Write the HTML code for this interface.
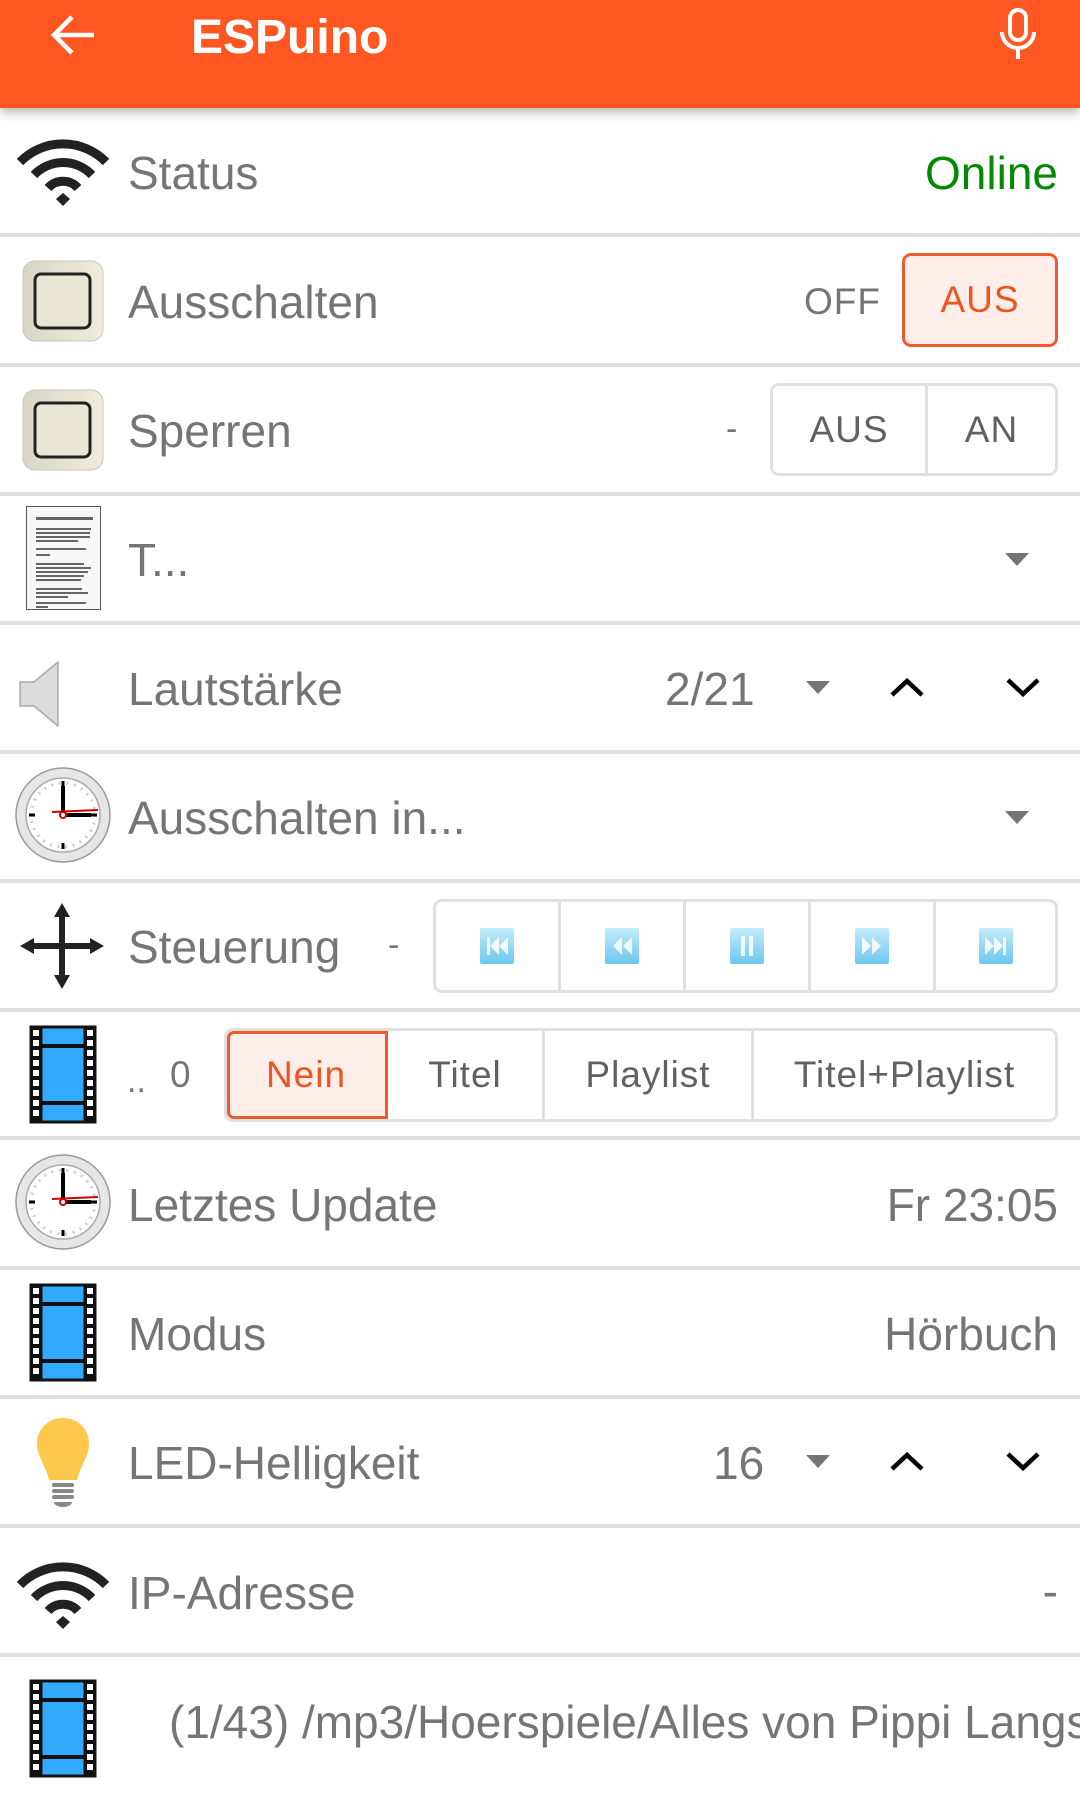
<!DOCTYPE html>
<html><head><meta charset="utf-8"><style>
*{margin:0;padding:0;box-sizing:border-box}
body{width:1080px;height:1818px;background:#fff;position:relative;overflow:hidden;font-family:"Liberation Sans",sans-serif;color:#757575}
.hdr{position:absolute;left:0;top:0;width:1080px;height:108px;background:#ff5722;box-shadow:0 4px 10px rgba(0,0,0,.3);z-index:2}
.sep{position:absolute;left:0;width:1080px;height:4px;background:#e0e0e0}
.t{position:absolute;font-size:46px;line-height:50px;white-space:nowrap}
.ab{position:absolute}
.seg{position:absolute;border:3px solid #e0e0e0;border-radius:9px;display:flex;overflow:hidden}
.seg>div{display:flex;align-items:center;justify-content:center;font-size:37px;letter-spacing:1px;color:#616161;border-right:3px solid #e0e0e0}
.seg>div:last-child{border-right:none}
.seg .on{background:#fdeeea;color:#f0541e;outline:3px solid #ee5a2a;outline-offset:-3px;border-radius:7px 0 0 7px}
</style></head><body>
<svg width="0" height="0" style="position:absolute"><defs>
<linearGradient id="bg" x1="0" y1="0" x2="0" y2="1"><stop offset="0" stop-color="#c4ecfc"/><stop offset="1" stop-color="#6cc6ee"/></linearGradient>
<linearGradient id="sw" x1="0" x2="1"><stop offset="0" stop-color="#d8d6c6"/><stop offset="1" stop-color="#efecdc"/></linearGradient>
</defs></svg>
<div class="hdr">
<svg class="ab" style="left:50px;top:14px" width="46" height="42" viewBox="0 0 46 42"><path d="M44 21H4M22 3L4 21L22 39" stroke="#fff" stroke-width="4.5" fill="none"/></svg>
<div class="t" style="left:191px;top:10px;color:#fff;font-size:48px;line-height:56px;font-weight:bold">ESPuino</div>
<svg class="ab" style="left:998px;top:8px" width="40" height="52" viewBox="0 0 40 52"><rect x="12" y="2" width="16" height="30" rx="8" fill="none" stroke="#fff" stroke-width="4"/><path d="M4 24a16 16 0 0 0 32 0M20 40v11" stroke="#fff" stroke-width="4" fill="none"/></svg>
</div>

<svg class="ab" style="left:14px;top:137px" width="98" height="70" viewBox="0 0 98 70"><g fill="none" stroke="#222" stroke-width="9"><path d="M6 25a60 60 0 0 1 86 0"/><path d="M20 38a40 40 0 0 1 58 0"/><path d="M34 51a20 20 0 0 1 30 0"/></g><path d="M42 62l7-6 7 6-7 7z" fill="#222"/></svg>
<div class="t" style="left:128px;top:148px">Status</div>
<div class="t" style="right:22px;top:148px;color:#008a00">Online</div>
<div class="sep" style="top:233px"></div>

<svg class="ab" style="left:22px;top:260px" width="82" height="82" viewBox="0 0 82 82"><rect x="1" y="1" width="80" height="80" rx="12" fill="url(#sw)" stroke="#c8c6b8"/><rect x="13" y="14" width="55" height="54" rx="6" fill="#e9e6d6" stroke="#222" stroke-width="3"/></svg>
<div class="t" style="left:128px;top:277px">Ausschalten</div>
<div class="t" style="left:804px;top:280px;font-size:37px;line-height:44px;letter-spacing:1px">OFF</div>
<div class="seg" style="left:902px;top:253px;width:156px;height:94px;border-color:#ee5a2a;background:#fdeeea"><div style="width:100%;color:#f0541e">AUS</div></div>
<div class="sep" style="top:363px"></div>

<svg class="ab" style="left:22px;top:389px" width="82" height="82" viewBox="0 0 82 82"><rect x="1" y="1" width="80" height="80" rx="12" fill="url(#sw)" stroke="#c8c6b8"/><rect x="13" y="14" width="55" height="54" rx="6" fill="#e9e6d6" stroke="#222" stroke-width="3"/></svg>
<div class="t" style="left:128px;top:406px">Sperren</div>
<div class="t" style="left:726px;top:404px;font-size:34px">-</div>
<div class="seg" style="left:770px;top:383px;width:288px;height:93px"><div style="width:155px">AUS</div><div style="flex:1">AN</div></div>
<div class="sep" style="top:492px"></div>

<svg class="ab" style="left:26px;top:506px" width="75" height="104" viewBox="0 0 75 104"><rect x="0.5" y="0.5" width="74" height="103" fill="#f7f7f7" stroke="#555"/><g fill="#666"><rect x="10" y="11" width="57" height="3"/><rect x="10" y="22" width="55" height="2"/><rect x="10" y="26" width="54" height="2"/><rect x="10" y="30" width="54" height="2"/><rect x="10" y="34" width="42" height="2"/><rect x="10" y="42" width="50" height="2"/><rect x="10" y="48" width="14" height="2"/><rect x="10" y="57" width="48" height="2"/><rect x="10" y="61" width="55" height="2"/><rect x="10" y="65" width="52" height="2"/><rect x="10" y="69" width="48" height="2"/><rect x="10" y="73" width="45" height="2"/><rect x="10" y="82" width="46" height="2"/><rect x="10" y="86" width="52" height="2"/><rect x="10" y="90" width="32" height="2"/><rect x="10" y="96" width="50" height="2"/><rect x="10" y="100" width="12" height="2"/></g></svg>
<div class="t" style="left:128px;top:535px">T...</div>
<svg class="ab" style="left:1005px;top:553px" width="24" height="13"><path d="M0 0h24L12 13z" fill="#757575"/></svg>
<div class="sep" style="top:621px"></div>

<svg class="ab" style="left:18px;top:660px" width="44" height="68" viewBox="0 0 44 68"><path d="M2 22h14L40 2v64L16 46H2z" fill="#dcdcdc" stroke="#aaa" stroke-width="1.5" stroke-linejoin="round"/></svg>
<div class="t" style="left:128px;top:664px">Lautstärke</div>
<div class="t" style="left:665px;top:664px">2/21</div>
<svg class="ab" style="left:806px;top:681px" width="24" height="13"><path d="M0 0h24L12 13z" fill="#757575"/></svg>
<svg class="ab" style="left:889px;top:676px" width="36" height="22"><path d="M3 19L18 5l15 14" stroke="#000" stroke-width="4.5" fill="none"/></svg>
<svg class="ab" style="left:1005px;top:676px" width="36" height="22"><path d="M3 4l15 14L33 4" stroke="#000" stroke-width="4.5" fill="none"/></svg>
<div class="sep" style="top:750px"></div>

<svg class="ab" style="left:14px;top:766px" width="98" height="98" viewBox="0 0 98 98"><circle cx="49" cy="49" r="47" fill="#e6e6e6" stroke="#999" stroke-width="1.5"/><circle cx="49" cy="49" r="37" fill="#fff" stroke="#aaa" stroke-width="1.5"/><circle cx="49" cy="49" r="32" fill="none" stroke="#ccc" stroke-width="3" stroke-dasharray="2 5.7"/><path d="M49 15v6M49 77v6M15 49h6M77 49h6" stroke="#000" stroke-width="3"/><path d="M49 20v29h28" stroke="#000" stroke-width="4" fill="none"/><path d="M38 46l46-2" stroke="#c00" stroke-width="2"/><circle cx="49" cy="49" r="3" fill="#fff" stroke="#c00" stroke-width="2"/></svg>
<div class="t" style="left:128px;top:793px">Ausschalten in...</div>
<svg class="ab" style="left:1005px;top:811px" width="24" height="13"><path d="M0 0h24L12 13z" fill="#757575"/></svg>
<div class="sep" style="top:879px"></div>

<svg class="ab" style="left:20px;top:903px" width="84" height="86" viewBox="0 0 84 86"><path d="M42 6v74M6 43h72" stroke="#222" stroke-width="6"/><path d="M42 0l-8 14h16zM42 86l-8-14h16zM0 43l14-8v16zM84 43l-14-8v16z" fill="#222"/></svg>
<div class="t" style="left:128px;top:922px">Steuerung</div>
<div class="t" style="left:388px;top:920px;font-size:34px">-</div>
<div class="seg" style="left:433px;top:899px;width:625px;height:94px">
<div style="width:125px"><svg width="34" height="36" viewBox="0 0 34 36"><rect width="34" height="36" rx="2" fill="url(#bg)"/><path d="M7 9h3v18H7zM19 9v18l-9-9zM28 9v18l-9-9z" fill="#fff" opacity=".85"/></svg></div>
<div style="width:125px"><svg width="34" height="36" viewBox="0 0 34 36"><rect width="34" height="36" rx="2" fill="url(#bg)"/><path d="M17 9v18l-9-9zM27 9v18l-9-9z" fill="#fff" opacity=".85"/></svg></div>
<div style="width:125px"><svg width="34" height="36" viewBox="0 0 34 36"><rect width="34" height="36" rx="2" fill="url(#bg)"/><path d="M11 8h4v20h-4zM19 8h4v20h-4z" fill="#fff" opacity=".85"/></svg></div>
<div style="width:125px"><svg width="34" height="36" viewBox="0 0 34 36"><rect width="34" height="36" rx="2" fill="url(#bg)"/><path d="M7 9v18l9-9zM17 9v18l9-9z" fill="#fff" opacity=".85"/></svg></div>
<div style="flex:1"><svg width="34" height="36" viewBox="0 0 34 36"><rect width="34" height="36" rx="2" fill="url(#bg)"/><path d="M6 9v18l9-9zM15 9v18l9-9zM24 9h3v18h-3z" fill="#fff" opacity=".85"/></svg></div></div>
<div class="sep" style="top:1008px"></div>

<svg class="ab" style="left:28px;top:1024px" width="70" height="101" viewBox="0 0 70 101"><rect x="1.5" y="1.5" width="67" height="98" fill="#111"/><rect x="13" y="3" width="44" height="95" fill="#33aaff" stroke="#111" stroke-width="3"/><path d="M13 22h44M13 79h44" stroke="#111" stroke-width="4"/><g fill="#fff"><rect x="5" y="6" width="6" height="6"/><rect x="5" y="16" width="6" height="6"/><rect x="5" y="26" width="6" height="6"/><rect x="5" y="36" width="6" height="6"/><rect x="5" y="46" width="6" height="6"/><rect x="5" y="56" width="6" height="6"/><rect x="5" y="66" width="6" height="6"/><rect x="5" y="76" width="6" height="6"/><rect x="5" y="86" width="6" height="6"/><rect x="59" y="6" width="6" height="6"/><rect x="59" y="16" width="6" height="6"/><rect x="59" y="26" width="6" height="6"/><rect x="59" y="36" width="6" height="6"/><rect x="59" y="46" width="6" height="6"/><rect x="59" y="56" width="6" height="6"/><rect x="59" y="66" width="6" height="6"/><rect x="59" y="76" width="6" height="6"/><rect x="59" y="86" width="6" height="6"/></g></svg>
<div class="t" style="left:127px;top:1056px;font-size:34px">..</div>
<div class="t" style="left:170px;top:1050px;font-size:37px">0</div>
<div class="seg" style="left:224px;top:1028px;width:834px;height:94px"><div class="on" style="width:161px">Nein</div><div style="width:157px">Titel</div><div style="width:209px">Playlist</div><div style="flex:1">Titel+Playlist</div></div>
<div class="sep" style="top:1136px"></div>

<svg class="ab" style="left:14px;top:1153px" width="98" height="98" viewBox="0 0 98 98"><circle cx="49" cy="49" r="47" fill="#e6e6e6" stroke="#999" stroke-width="1.5"/><circle cx="49" cy="49" r="37" fill="#fff" stroke="#aaa" stroke-width="1.5"/><circle cx="49" cy="49" r="32" fill="none" stroke="#ccc" stroke-width="3" stroke-dasharray="2 5.7"/><path d="M49 15v6M49 77v6M15 49h6M77 49h6" stroke="#000" stroke-width="3"/><path d="M49 20v29h28" stroke="#000" stroke-width="4" fill="none"/><path d="M38 46l46-2" stroke="#c00" stroke-width="2"/><circle cx="49" cy="49" r="3" fill="#fff" stroke="#c00" stroke-width="2"/></svg>
<div class="t" style="left:128px;top:1180px">Letztes Update</div>
<div class="t" style="right:22px;top:1180px">Fr 23:05</div>
<div class="sep" style="top:1266px"></div>

<svg class="ab" style="left:28px;top:1282px" width="70" height="101" viewBox="0 0 70 101"><rect x="1.5" y="1.5" width="67" height="98" fill="#111"/><rect x="13" y="3" width="44" height="95" fill="#33aaff" stroke="#111" stroke-width="3"/><path d="M13 22h44M13 79h44" stroke="#111" stroke-width="4"/><g fill="#fff"><rect x="5" y="6" width="6" height="6"/><rect x="5" y="16" width="6" height="6"/><rect x="5" y="26" width="6" height="6"/><rect x="5" y="36" width="6" height="6"/><rect x="5" y="46" width="6" height="6"/><rect x="5" y="56" width="6" height="6"/><rect x="5" y="66" width="6" height="6"/><rect x="5" y="76" width="6" height="6"/><rect x="5" y="86" width="6" height="6"/><rect x="59" y="6" width="6" height="6"/><rect x="59" y="16" width="6" height="6"/><rect x="59" y="26" width="6" height="6"/><rect x="59" y="36" width="6" height="6"/><rect x="59" y="46" width="6" height="6"/><rect x="59" y="56" width="6" height="6"/><rect x="59" y="66" width="6" height="6"/><rect x="59" y="76" width="6" height="6"/><rect x="59" y="86" width="6" height="6"/></g></svg>
<div class="t" style="left:128px;top:1309px">Modus</div>
<div class="t" style="right:22px;top:1309px">Hörbuch</div>
<div class="sep" style="top:1395px"></div>

<svg class="ab" style="left:36px;top:1417px" width="54" height="94" viewBox="0 0 54 94"><path d="M27 1C12 1 1 12 1 27c0 12 8 20 12 36h28c4-16 12-24 12-36C53 12 42 1 27 1z" fill="#fec84d"/><g fill="#888"><rect x="16" y="66" width="22" height="4" rx="2"/><rect x="16" y="72" width="22" height="4" rx="2"/><rect x="16" y="78" width="22" height="4" rx="2"/><path d="M18 85h18a9 5 0 0 1-18 0z"/></g></svg>
<div class="t" style="left:128px;top:1438px">LED-Helligkeit</div>
<div class="t" style="left:713px;top:1438px">16</div>
<svg class="ab" style="left:806px;top:1455px" width="24" height="13"><path d="M0 0h24L12 13z" fill="#757575"/></svg>
<svg class="ab" style="left:889px;top:1450px" width="36" height="22"><path d="M3 19L18 5l15 14" stroke="#000" stroke-width="4.5" fill="none"/></svg>
<svg class="ab" style="left:1005px;top:1450px" width="36" height="22"><path d="M3 4l15 14L33 4" stroke="#000" stroke-width="4.5" fill="none"/></svg>
<div class="sep" style="top:1524px"></div>

<svg class="ab" style="left:14px;top:1560px" width="98" height="72" viewBox="0 0 98 72"><g fill="none" stroke="#222" stroke-width="9"><path d="M6 25a60 60 0 0 1 86 0"/><path d="M20 38a40 40 0 0 1 58 0"/><path d="M34 51a20 20 0 0 1 30 0"/></g><path d="M42 62l7-6 7 6-7 7z" fill="#222"/></svg>
<div class="t" style="left:128px;top:1568px">IP-Adresse</div>
<div class="t" style="right:22px;top:1566px">-</div>
<div class="sep" style="top:1653px"></div>

<svg class="ab" style="left:28px;top:1678px" width="70" height="101" viewBox="0 0 70 101"><rect x="1.5" y="1.5" width="67" height="98" fill="#111"/><rect x="13" y="3" width="44" height="95" fill="#33aaff" stroke="#111" stroke-width="3"/><path d="M13 22h44M13 79h44" stroke="#111" stroke-width="4"/><g fill="#fff"><rect x="5" y="6" width="6" height="6"/><rect x="5" y="16" width="6" height="6"/><rect x="5" y="26" width="6" height="6"/><rect x="5" y="36" width="6" height="6"/><rect x="5" y="46" width="6" height="6"/><rect x="5" y="56" width="6" height="6"/><rect x="5" y="66" width="6" height="6"/><rect x="5" y="76" width="6" height="6"/><rect x="5" y="86" width="6" height="6"/><rect x="59" y="6" width="6" height="6"/><rect x="59" y="16" width="6" height="6"/><rect x="59" y="26" width="6" height="6"/><rect x="59" y="36" width="6" height="6"/><rect x="59" y="46" width="6" height="6"/><rect x="59" y="56" width="6" height="6"/><rect x="59" y="66" width="6" height="6"/><rect x="59" y="76" width="6" height="6"/><rect x="59" y="86" width="6" height="6"/></g></svg>
<div class="ab" style="left:169px;top:1690px;width:911px;height:70px;overflow:hidden"><div class="t" style="left:0;top:7px">(1/43) /mp3/Hoerspiele/Alles von Pippi Langstrumpf</div></div>
</body></html>
